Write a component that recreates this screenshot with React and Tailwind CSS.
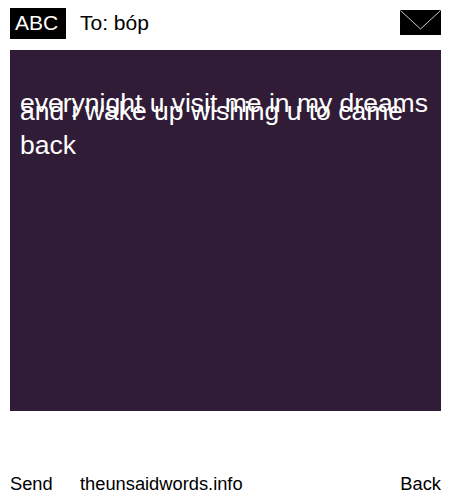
const App = () => {
  return (
    <div className="w-[450px] h-[500px] bg-white text-black font-['Liberation_Sans',Arial,sans-serif] flex flex-col px-[10px] pr-[9px]">
      <div className="flex items-start h-[50px] pt-2">
        <div className="w-14 h-[31px] bg-black text-white text-[21px] leading-[29px] pl-[5px]">ABC</div>
        <div className="ml-[14px] text-[21px] leading-[29px]">To: bóp</div>
        <svg className="ml-auto mt-[2px]" width="41" height="25" viewBox="0 0 41 25">
          <rect width="41" height="25" fill="#000" />
          <path d="M0.5 0.5 L20.5 19 L40.5 0.5" fill="none" stroke="#fff" strokeWidth="0.8" />
        </svg>
      </div>

      <div className="relative h-[361px] bg-[#311c37] text-white px-[10px] pt-[44px]">
        <p className="absolute left-[10px] top-[36px] whitespace-nowrap text-[26.5px] leading-[34px]">everynight u visit me in my dreams</p>
        <p className="text-[26.5px] leading-[34px]">and i wake up wishing u to came back</p>
      </div>

      <div className="flex items-center mt-[61px] text-[18.3px] leading-6">
        <span className="w-[70px]">Send</span>
        <span>theunsaidwords.info</span>
        <span className="ml-auto">Back</span>
      </div>
    </div>
  );
};

export default App;
